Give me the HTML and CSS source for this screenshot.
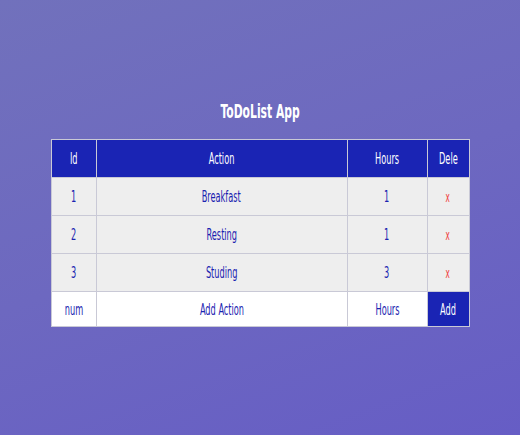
FILE: index.html
```
<!DOCTYPE html>
<html>
<head>
<meta charset="utf-8">
<link rel="stylesheet" href="styles.css">
</head>
<body>
<div class="page">
  <h1 class="title"><span class="sq">ToDoList App</span></h1>
  <table class="todo">
    <colgroup>
      <col class="c-id"><col class="c-action"><col class="c-hours"><col class="c-del">
    </colgroup>
    <thead>
      <tr><th><span class="sq">Id</span></th><th><span class="sq">Action</span></th><th><span class="sq">Hours</span></th><th><span class="sq">Dele</span></th></tr>
    </thead>
    <tbody>
      <tr class="item"><td><span class="sq">1</span></td><td><span class="sq">Breakfast</span></td><td><span class="sq">1</span></td><td class="del"><span class="sq">x</span></td></tr>
      <tr class="item"><td><span class="sq">2</span></td><td><span class="sq">Resting</span></td><td><span class="sq">1</span></td><td class="del"><span class="sq">x</span></td></tr>
      <tr class="item"><td><span class="sq">3</span></td><td><span class="sq">Studing</span></td><td><span class="sq">3</span></td><td class="del"><span class="sq">x</span></td></tr>
      <tr class="add-row">
        <td><input class="field" placeholder="num"></td>
        <td><input class="field" placeholder="Add Action"></td>
        <td><input class="field" placeholder="Hours"></td>
        <td class="add-btn"><span class="sq">Add</span></td>
      </tr>
    </tbody>
  </table>
</div>
</body>
</html>
```

FILE: styles.css
```
html, body {
  margin: 0;
  padding: 0;
  height: 100%;
}
body {
  background: linear-gradient(160deg, #7171bc 0%, #6d68c0 50%, #665dc5 100%);
  font-family: "DejaVu Sans Condensed", "DejaVu Sans", sans-serif;
  color: #1a23b0;
}
.page {
  display: flex;
  flex-direction: column;
  align-items: center;
  padding-top: 99px;
}
.sq {
  display: inline-block;
  transform: scaleX(0.57);
  white-space: nowrap;
}
.title {
  margin: 0 0 15px 0;
  font-size: 20px;
  font-weight: 700;
  color: #ffffff;
  line-height: 25px;
}
.title .sq {
  transform: scaleX(0.6);
}
.todo {
  border-collapse: collapse;
  table-layout: fixed;
  width: 418px;
  font-size: 16px;
}
.c-id { width: 45px; }
.c-action { width: 251px; }
.c-hours { width: 80px; }
.c-del { width: 42px; }
.todo th, .todo td {
  border: 1px solid #c9c9d6;
  text-align: center;
  padding: 0;
  font-weight: 400;
}
.todo th {
  background: #1a24b4;
  color: #ffffff;
  height: 37px;
}
.item td {
  background: #eeeeee;
  height: 37px;
  color: #1a23b0;
}
.item td.del {
  color: #ef3b3b;
  font-size: 14px;
}
.add-row td {
  background: #ffffff;
  height: 34px;
}
.field {
  width: 100%;
  box-sizing: border-box;
  border: none;
  background: transparent;
  text-align: center;
  font-family: inherit;
  font-size: 16px;
  padding: 0;
  outline: none;
  transform: scaleX(0.57);
}
.field::placeholder {
  color: #1a23b0;
  opacity: 1;
}
.add-row td.add-btn {
  background: #1a24b4;
  color: #ffffff;
}
```
